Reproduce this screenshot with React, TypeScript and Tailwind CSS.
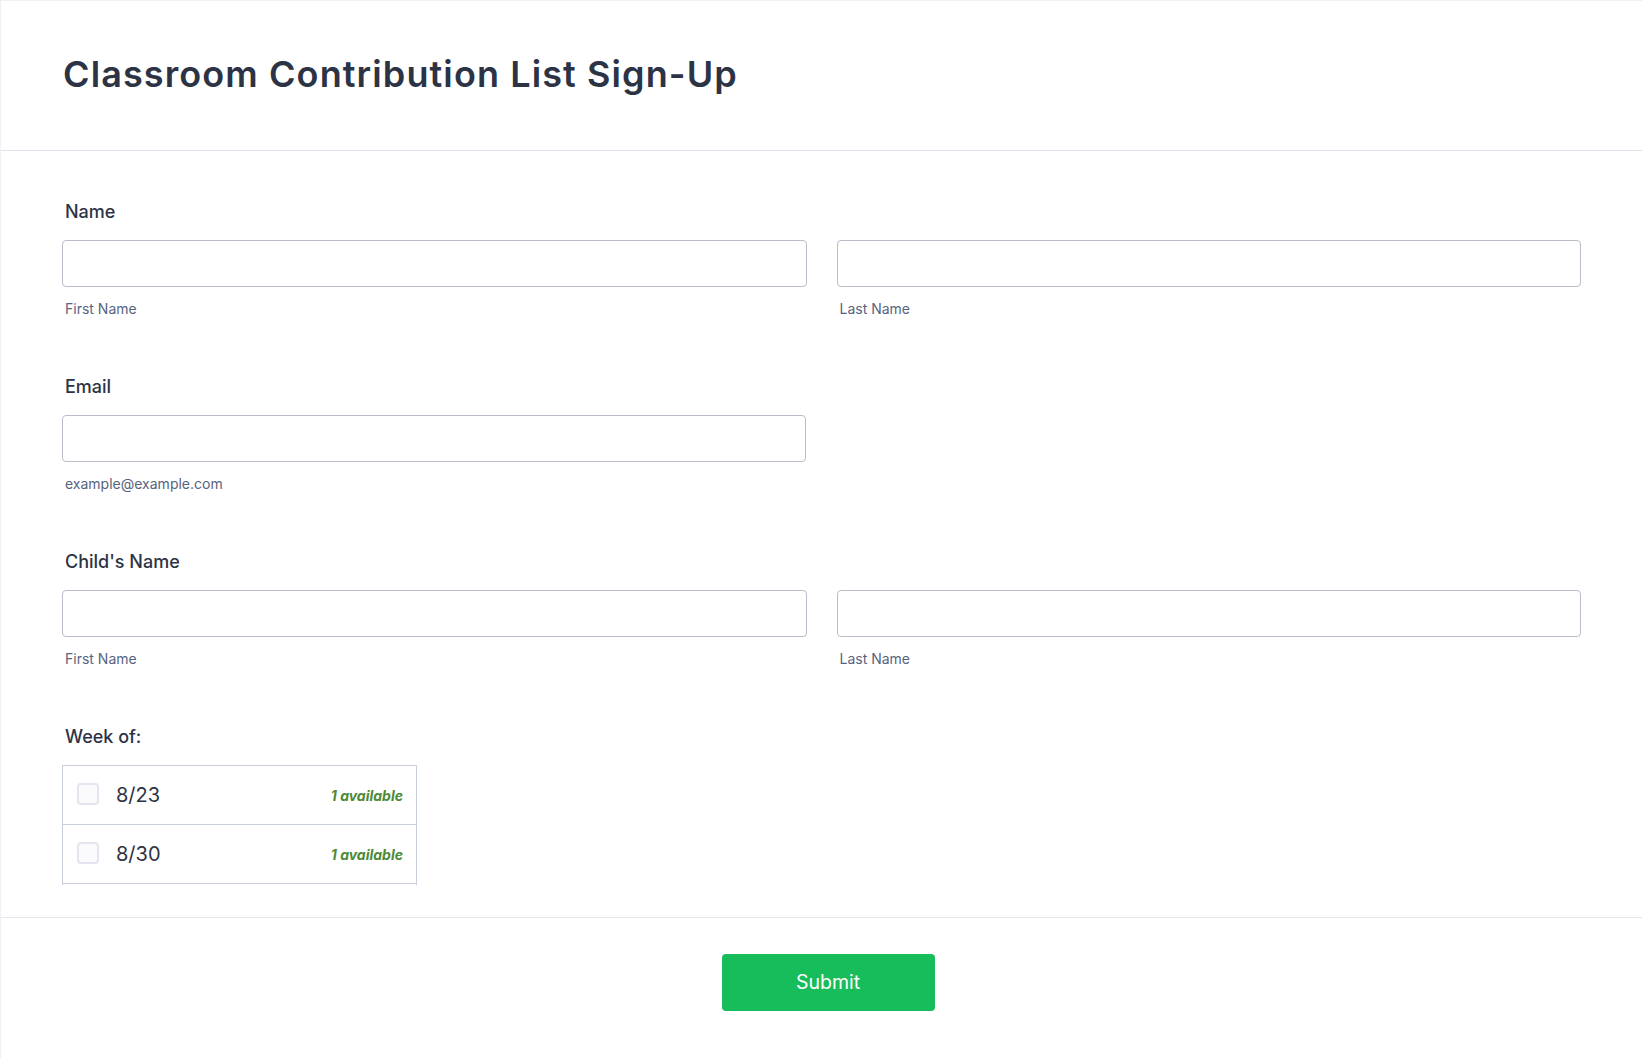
/**
 * Classroom contribution sign-up form — single card, header / fields / footer.
 */

const INK = 'text-[#2c3345]'

type Slot = { week: string; left: number }

const WEEKS: Slot[] = [
  { week: '8/23', left: 1 },
  { week: '8/30', left: 1 },
]

function FieldLabel({ children }: { children: React.ReactNode }): React.JSX.Element {
  return <div className={`text-[18px] leading-[26px] font-medium ${INK} pl-[3px] mb-[15px]`}>{children}</div>
}

function TextBox(): React.JSX.Element {
  return (
    <input
      type="text"
      className="w-full h-[47px] rounded-[4px] border border-[#b8bdc9] bg-white px-3 text-[16px] outline-none"
    />
  )
}

function SubLabel({ children }: { children: React.ReactNode }): React.JSX.Element {
  return <div className="mt-[12px] pl-[3px] text-[14px] leading-5 text-[#57647e]">{children}</div>
}

function SplitName({ label }: { label: string }): React.JSX.Element {
  return (
    <div>
      <FieldLabel>{label}</FieldLabel>
      <div className="grid grid-cols-2 gap-[30px]">
        <div>
          <TextBox />
          <SubLabel>First Name</SubLabel>
        </div>
        <div>
          <TextBox />
          <SubLabel>Last Name</SubLabel>
        </div>
      </div>
    </div>
  )
}

// list is a scroll box in the original form; only the first two rows show,
// plus the top edge of the next one
function WeekList(): React.JSX.Element {
  return (
    <div>
      <FieldLabel>Week of:</FieldLabel>
      <div className="w-[355px] border-x border-t border-[#c8ceda]">
        {WEEKS.map((w) => (
          <label
            key={w.week}
            className="flex h-[59px] items-center border-b border-[#c8ceda] pl-[14px] pr-[13px]"
          >
            <span className="mb-[3px] size-[22px] shrink-0 rounded-[4px] border-2 border-[#e3e6ee] bg-[#fbfbfd]" />
            <span className={`ml-[17px] text-[20px] ${INK}`}>{w.week}</span>
            <span className="ml-auto text-[14px] font-bold italic text-[#4d8a37]">{w.left} available</span>
          </label>
        ))}
        <div className="h-[1px]" />
      </div>
    </div>
  )
}

export default function App(): React.JSX.Element {
  return (
    <div
      className="min-h-[1058px] w-full bg-white border-l border-t border-[#eef0f4]"
      style={{ fontFamily: 'Inter, "Noto Sans", sans-serif' }}
    >
      <header className="flex h-[150px] items-center border-b border-[#dfe1ea] px-[62px] pb-[4px]">
        <h1 className={`text-[36px] font-semibold tracking-[1.1px] ${INK}`}>
          Classroom Contribution List Sign-Up
        </h1>
      </header>

      <main className="flex flex-col gap-[55px] px-[61px] pt-[48px] pb-[32px]">
        <SplitName label="Name" />

        <div>
          <FieldLabel>Email</FieldLabel>
          <div className="w-[744px]">
            <TextBox />
            <SubLabel>example@example.com</SubLabel>
          </div>
        </div>

        <SplitName label="Child's Name" />

        <WeekList />
      </main>

      <footer className="flex justify-center border-t border-[#e6e8ef] pt-[36px] pb-[47px] pl-[13px]">
        <button
          type="button"
          className="h-[57px] w-[213px] rounded-[4px] bg-[#18bd5b] text-[19.5px] font-normal text-white"
        >
          Submit
        </button>
      </footer>
    </div>
  )
}
